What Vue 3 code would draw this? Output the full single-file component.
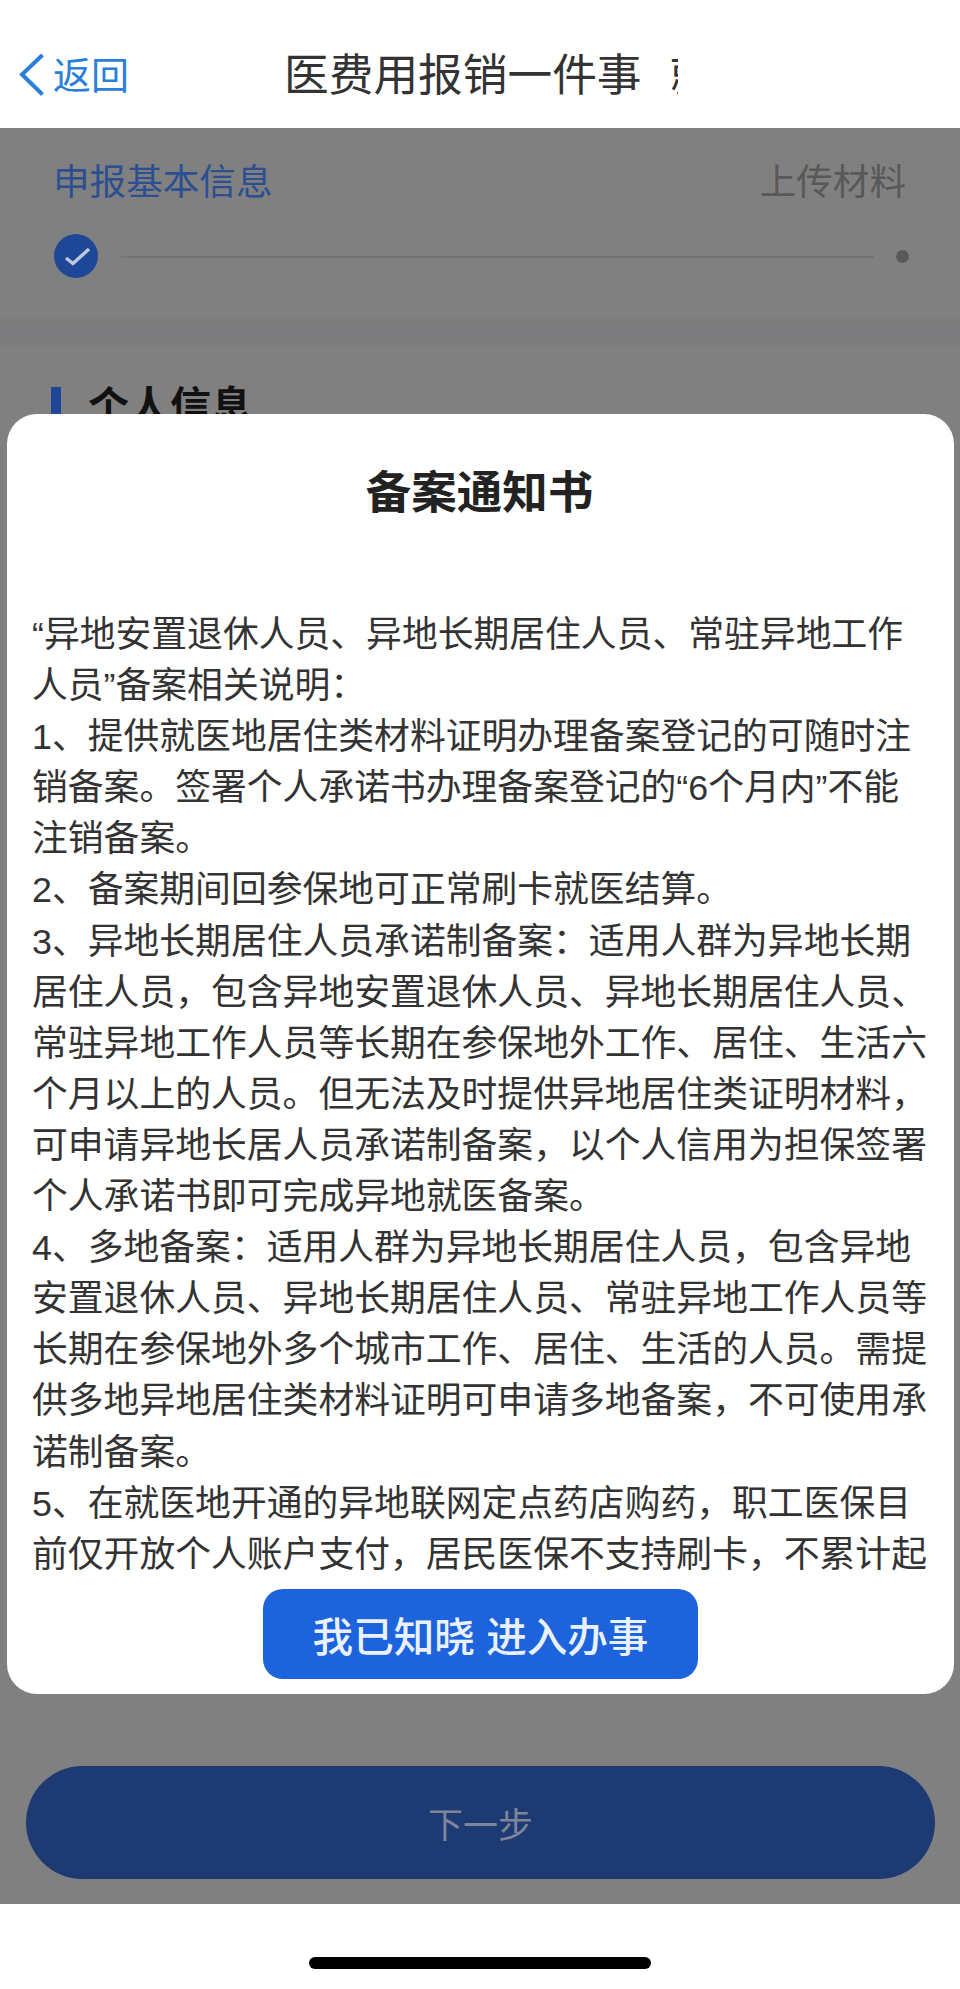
<script setup>
const paragraphs = [
  '“异地安置退休人员、异地长期居住人员、常驻异地工作人员”备案相关说明：',
  '1、提供就医地居住类材料证明办理备案登记的可随时注销备案。签署个人承诺书办理备案登记的“6个月内”不能注销备案。',
  '2、备案期间回参保地可正常刷卡就医结算。',
  '3、异地长期居住人员承诺制备案：适用人群为异地长期居住人员，包含异地安置退休人员、异地长期居住人员、常驻异地工作人员等长期在参保地外工作、居住、生活六个月以上的人员。但无法及时提供异地居住类证明材料，可申请异地长居人员承诺制备案，以个人信用为担保签署个人承诺书即可完成异地就医备案。',
  '4、多地备案：适用人群为异地长期居住人员，包含异地安置退休人员、异地长期居住人员、常驻异地工作人员等长期在参保地外多个城市工作、居住、生活的人员。需提供多地异地居住类材料证明可申请多地备案，不可使用承诺制备案。',
  '5、在就医地开通的异地联网定点药店购药，职工医保目前仅开放个人账户支付，居民医保不支持刷卡，不累计起付线和封顶线，结算后按规定报销。'
]
</script>

<template>
  <div class="page" lang="zh-CN">
    <header class="nav">
      <a class="back">
        <svg class="chevron" width="26" height="44" viewBox="0 0 26 44" fill="none">
          <path d="M23.5 2 L3 21.5 L23.5 41.5" stroke="#2a7fd8" stroke-width="4" stroke-linejoin="miter" />
        </svg>
        <span>返回</span>
      </a>
      <div class="title-clip">
        <span class="title-text">医费用报销一件事</span>
        <span class="title-text title-next">就医费用报销一件事</span>
      </div>
    </header>

    <main class="main">
      <section class="steps">
        <div class="step-labels">
          <span class="step-active">申报基本信息</span>
          <span class="step-idle">上传材料</span>
        </div>
        <div class="track">
          <span class="check">
            <svg width="44" height="44" viewBox="0 0 44 44" fill="none">
              <path d="M12 24 L19 29.5 L35 15" stroke="#bcc8de" stroke-width="3.4" />
            </svg>
          </span>
          <span class="track-line"></span>
          <span class="track-dot"></span>
        </div>
      </section>
      <div class="band"></div>
      <section class="info">
        <span class="info-bar"></span>
        <h2 class="info-title">个人信息</h2>
      </section>
      <button class="next">下一步</button>
    </main>

    <footer class="home">
      <span class="home-bar"></span>
    </footer>

    <div class="modal">
      <h1 class="modal-title">备案通知书</h1>
      <div class="modal-body">
        <p v-for="(p, i) in paragraphs" :key="i">{{ p }}</p>
      </div>
      <button class="confirm">我已知晓 进入办事</button>
    </div>
  </div>
</template>

<style scoped>
.page {
  position: relative;
  width: 960px;
  height: 1989px;
  display: flex;
  flex-direction: column;
  overflow: hidden;
  background: #fff;
  font-family: "Liberation Sans", "Noto Sans CJK SC", sans-serif;
}
.nav {
  height: 128px;
  flex: none;
  display: flex;
  align-items: center;
  padding-left: 19px;
  padding-top: 24px;
  box-sizing: border-box;
  background: #fff;
}
.back {
  display: flex;
  align-items: center;
  gap: 8px;
  color: #2a7fd8;
  font-size: 38px;
  line-height: 44px;
  width: 110px;
  flex: none;
  white-space: nowrap;
}
.chevron {
  flex: none;
  margin-top: -2px;
}
.title-clip {
  margin-left: 155px;
  width: 394px;
  display: flex;
  overflow: hidden;
  white-space: nowrap;
  flex: none;
}
.title-text {
  flex: none;
  font-size: 44.7px;
  line-height: 56px;
  color: #333;
}
.title-next {
  margin-left: 28px;
}
.main {
  flex: 1;
  min-height: 0;
  display: flex;
  flex-direction: column;
  background: #808080;
}
.steps {
  height: 189px;
  flex: none;
  box-sizing: border-box;
  padding-top: 36px;
}
.step-labels {
  display: flex;
  justify-content: space-between;
  padding: 0 54px 0 53px;
  font-size: 36.6px;
  line-height: 37px;
}
.step-active {
  color: #2c4f92;
}
.step-idle {
  color: #585858;
}
.track {
  display: flex;
  align-items: center;
  margin-top: 33px;
  padding: 0 51px 0 54px;
}
.check {
  width: 44px;
  height: 44px;
  flex: none;
  border-radius: 50%;
  background: #1f4797;
}
.check svg {
  display: block;
}
.track-line {
  flex: 1;
  height: 2px;
  margin: 2px 22px 0 23px;
  background: #747474;
}
.track-dot {
  width: 13px;
  height: 13px;
  flex: none;
  border-radius: 50%;
  background: #595959;
}
.band {
  height: 31px;
  flex: none;
  background: linear-gradient(#7e7e7e, #7c7c7e 25%, #7c7c7e 75%, #7f7f7f);
}
.info {
  display: flex;
  align-items: flex-start;
  padding: 39px 0 0 51px;
}
.info-bar {
  width: 10px;
  height: 36px;
  flex: none;
  background: #1f4797;
}
.info-title {
  margin: -5px 0 0 27px;
  font-size: 41px;
  line-height: 50px;
  font-weight: 700;
  color: #111;
}
.next {
  margin: auto 25px 25px 26px;
  height: 113px;
  flex: none;
  border: none;
  border-radius: 57px;
  background: #1e3a73;
  color: #7d869a;
  font: inherit;
  font-size: 35px;
}
.home {
  height: 85px;
  flex: none;
  display: flex;
  justify-content: center;
  padding-top: 53px;
  box-sizing: border-box;
  background: #fff;
}
.home-bar {
  width: 342px;
  height: 12px;
  border-radius: 6px;
  background: #000;
}
.modal {
  position: absolute;
  top: 414px;
  left: 7px;
  width: 947px;
  height: 1280px;
  display: flex;
  flex-direction: column;
  align-items: center;
  box-sizing: border-box;
  border-radius: 30px;
  background: #fff;
  padding-bottom: 15px;
}
.modal-title {
  margin: 50px 0 0;
  padding-right: 2px;
  font-size: 45.5px;
  line-height: 60px;
  font-weight: 700;
  color: #222;
  flex: none;
}
.modal-body {
  flex: 1;
  min-height: 0;
  align-self: stretch;
  overflow: hidden;
  margin-top: 86px;
  padding: 0 22px 0 25px;
  font-size: 35.8px;
  line-height: 51.1px;
  color: #333;
}
.modal-body p {
  margin: 0;
}
.confirm {
  flex: none;
  width: 435px;
  height: 90px;
  margin-top: 11px;
  border: none;
  border-radius: 20px;
  background: #1c63dc;
  color: #eaf1fe;
  font: inherit;
  font-size: 40.6px;
  font-weight: 500;
}
</style>
